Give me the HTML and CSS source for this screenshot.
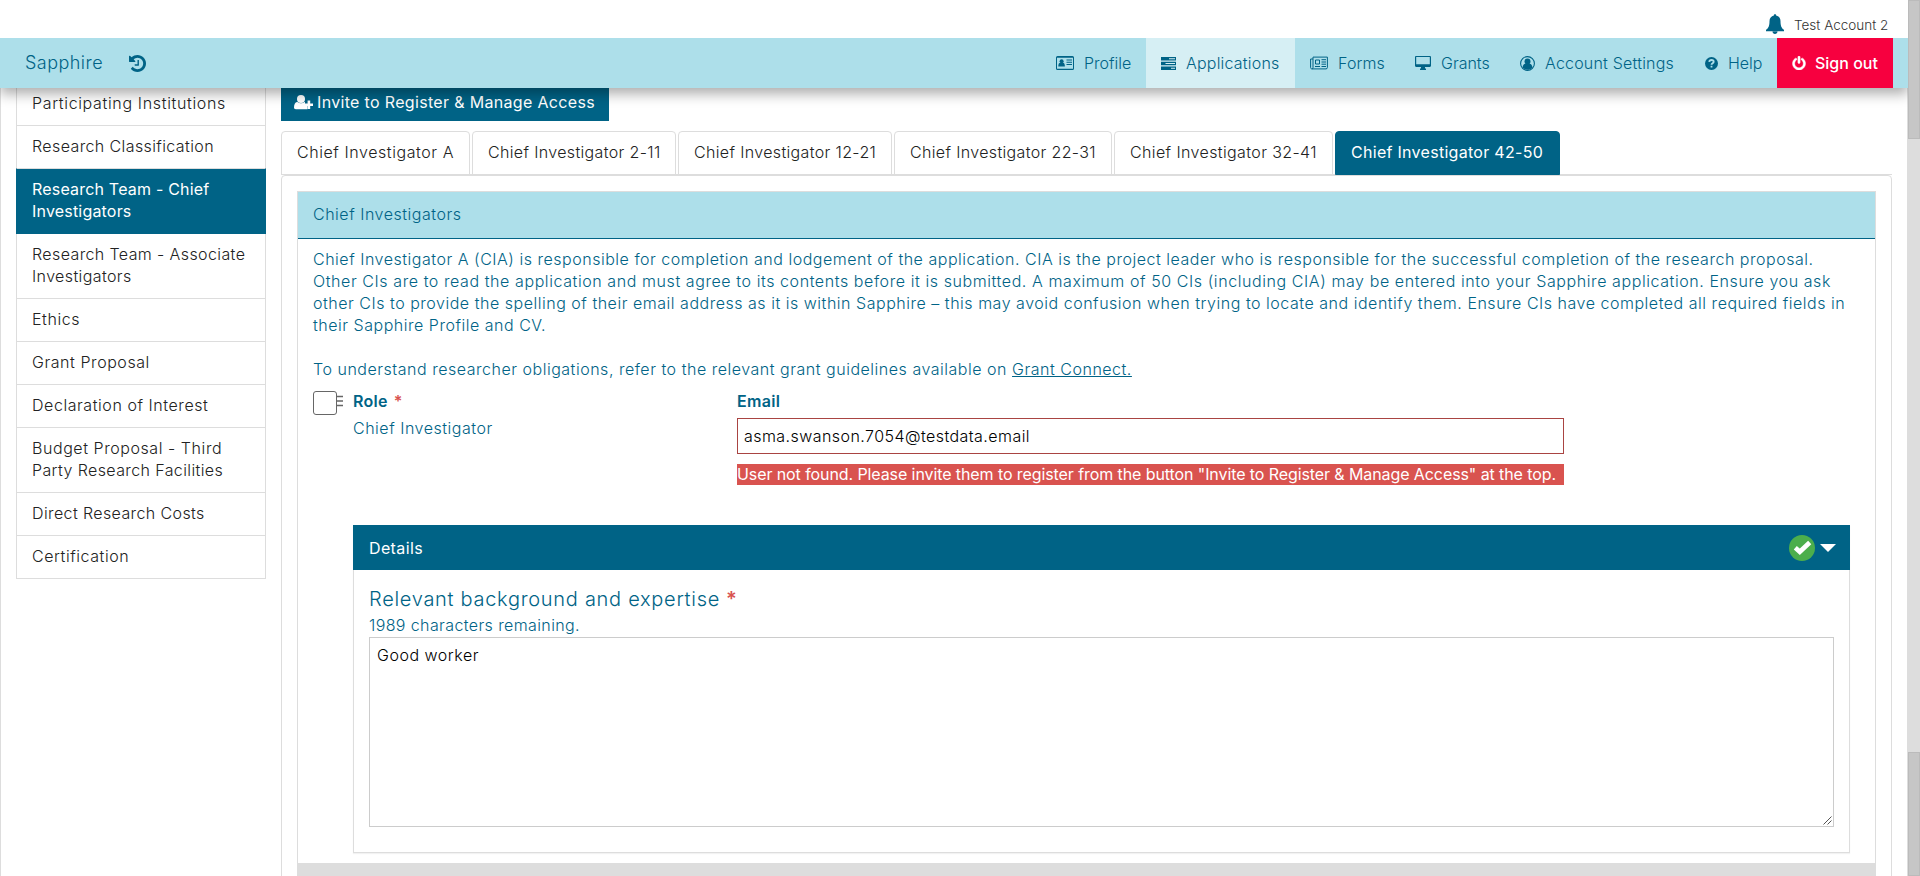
FILE: index.html
```html
<!DOCTYPE html>
<html lang="en">
<head>
<meta charset="utf-8">
<title>Sapphire</title>
<link rel="stylesheet" href="styles.css">
</head>
<body>
<div class="page">
  <div class="app">
    <div class="account">
      <svg class="bell" viewBox="0 0 18 20"><path d="M9 0.3c1 0 1.2.6 1.1 1.3 2.700.6 4.400 2.700 4.400 5.600 0 4.700 1 6.900 3.500 8.600v1.500H0v-1.500c2.500-1.700 3.500-3.900 3.500-8.600 0-2.900 1.700-5 4.400-5.600C7.800.9 8 .3 9 .3zM6.500 17.500h5c0 1.400-1.100 2.400-2.500 2.400s-2.500-1-2.500-2.400z"/></svg>
      <div class="account-name"><span>Test Account 2</span></div>
    </div>
    <header class="navbar">
      <div class="brand"><span>Sapphire</span></div>
      <svg class="history" viewBox="0 128 1536 1536"><path d="M1536 896q0 156-61 298t-164 245-245 164-298 61q-172 0-327-72.500t-264-204.500q-7-10-6.500-22.500t8.500-20.500l137-138q10-9 25-9 16 2 23 12 73 95 179 147t225 52q104 0 198.500-40.500t163.500-109.500 109.500-163.500 40.500-198.500-40.500-198.500-109.500-163.500-163.500-109.500-198.500-40.500q-98 0-188 35.500t-160 101.500l137 138q31 30 14 69-17 40-59 40h-448q-26 0-45-19t-19-45v-448q0-42 40-59 39-17 69 14l130 129q107-101 244.500-156.500t284.500-55.500q156 0 298 61t245 164 164 245 61 298zm-640-288v448q0 14-9 23t-23 9h-320q-14 0-23-9t-9-23v-64q0-14 9-23t23-9h224v-352q0-14 9-23t23-9h64q14 0 23 9t9 23z"/></svg>
      <nav class="menu">
        <a class="item profile"><svg class="ic w18" viewBox="0 0 18 14"><path fill-rule="evenodd" d="M1.500 0h15A1.500 1.500 0 0 1 18 1.500v11a1.500 1.500 0 0 1-1.500 1.500h-15A1.500 1.500 0 0 1 0 12.500v-11A1.500 1.500 0 0 1 1.500 0zM1 1.800v11h16v-11z"/><circle cx="5.600" cy="5.200" r="2"/><path d="M2.300 10.500c0-2.200.7-3.500 1.700-3.700h3.200c1 .2 1.700 1.500 1.700 3.700zM10.500 3.500H16v1h-5.500zM10.500 5.700H16v1h-5.500zM10.500 8H16v1h-5.500z"/></svg><span>Profile</span></a>
        <a class="item applications"><svg class="ic w15" viewBox="0 0 15 13"><path fill-rule="evenodd" d="M0 0h15v3.400H0zM8 1.200v1h6v-1zM0 4.700h15v3.500H0zM4.500 6v1H14V6zM0 9.500h15V13H0zM10 10.800v1h4v-1z"/></svg><span>Applications</span></a>
        <a class="item forms"><svg class="ic w18" viewBox="0 0 18 13"><path fill="none" stroke="currentColor" d="M3 .6h14.400v10.400c0 .9-.6 1.400-1.400 1.400H2C1 12.400.6 11.800.6 11V2.500H3M3 .6v10.600c0 .7-.4 1.200-1 1.200M5.500 3.500h4v4h-4zM5 10h5M11.500 3.200H16M11.500 5.500H16M11.500 7.700H16M11.500 10H16"/></svg><span>Forms</span></a>
        <a class="item grants"><svg class="ic w16" viewBox="0 0 16 14"><path fill-rule="evenodd" d="M1.200 0h13.600C15.500 0 16 .5 16 1.200v8.600c0 .7-.5 1.200-1.200 1.200H10v1.500h1V14H5v-1.500h1V11H1.200C.5 11 0 10.500 0 9.800V1.200C0 .5.500 0 1.200 0zM1.200 1.100v7.200h13.600V1.100z"/></svg><span>Grants</span></a>
        <a class="item settings"><svg class="ic w15" viewBox="0 0 15 15"><circle cx="7.500" cy="7.500" r="6.900" fill="none" stroke="currentColor" stroke-width="1.100"/><circle cx="7.500" cy="5.600" r="3"/><path d="M2.500 11.500c.3-2.500 1.400-3.700 2.800-3.800h4.400c1.400.1 2.500 1.300 2.800 3.800-1.300 1.500-3 2.300-5 2.300s-3.700-.8-5-2.300z"/></svg><span>Account Settings</span></a>
        <a class="item help"><svg class="ic w13" viewBox="0 0 13 13"><circle cx="6.500" cy="6.500" r="6.500"/><path fill="none" stroke="#addfea" stroke-width="1.800" d="M4.200 4.900C4.400 3.500 5.300 3 6.500 3c1.300 0 2.200.7 2.200 1.700 0 1.500-2.200 1.500-2.200 3.100M6.500 8.800v1.800"/></svg><span>Help</span></a>
        <a class="item signout"><svg class="ic w14" viewBox="0 0 1536 1664"><path stroke="#fff" stroke-width="60" d="M1536 896q0 156-61 298t-164 245-245 164-298 61-298-61-245-164-164-245-61-298q0-182 80.500-343t226.500-270q43-32 95.500-25t83.500 50q32 42 24.500 94.500t-49.500 84.500q-98 74-151.500 181t-53.500 228q0 104 40.500 198.500t109.500 163.500 163.500 109.500 198.500 40.500 198.500-40.500 163.500-109.500 109.500-163.500 40.500-198.500q0-121-53.500-228t-151.500-181q-42-32-49.500-84.500t24.500-94.500q31-43 84-50t95 25q146 109 226.500 270t80.500 343zm-640-768v640q0 52-38 90t-90 38-90-38-38-90v-640q0-52 38-90t90-38 90 38 38 90z"/></svg><span>Sign out</span></a>
      </nav>
    </header>
    <main class="content">
      <ul class="side">
        <li class="wider">Participating Institutions</li>
        <li class="tight">Research Classification</li>
        <li class="on">Research Team - Chief<br>Investigators</li>
        <li class="tight">Research Team - Associate<br>Investigators</li>
        <li>Ethics</li>
        <li>Grant Proposal</li>
        <li>Declaration of Interest</li>
        <li>Budget Proposal - Third<br><span class="tight">Party Research Facilities</span></li>
        <li class="tight">Direct Research Costs</li>
        <li>Certification</li>
      </ul>
      <section class="work">
        <button class="invite"><svg class="plus" viewBox="0 0 19 15"><circle cx="7" cy="4" r="4"/><path d="M0 12.500C0 9 1.300 7 3.500 7c2 1.700 5 1.700 7 0h.5v2.500h2.500v4.700H1.800C.7 14.200 0 13.500 0 12.500z"/><path d="M13.600 5.500h2.600v3H19V11h-2.800v3h-2.600v-3h-2.800V8.500h2.800z"/></svg><span>Invite to Register &amp; Manage Access</span></button>
        <div class="tabs">
          <a class="tab t1">Chief Investigator A</a>
          <a class="tab t2">Chief Investigator 2-11</a>
          <a class="tab t3">Chief Investigator 12-21</a>
          <a class="tab t4">Chief Investigator 22-31</a>
          <a class="tab t5">Chief Investigator 32-41</a>
          <a class="tab t6 on">Chief Investigator 42-50</a>
        </div>
        <div class="pane">
          <div class="panel">
            <h2 class="panel-title">Chief Investigators</h2>
            <div class="panel-body">
              <p class="intro"><span>Chief Investigator A (CIA) is responsible for completion and lodgement of the application. CIA is the project leader who is responsible for the successful completion of the research proposal.</span><br><span class="loose">Other CIs are to read the application and must agree to its contents before it is submitted. A maximum of 50 CIs (including CIA) may be entered into your Sapphire application. Ensure you ask</span><br><span>other CIs to provide the spelling of their email address as it is within Sapphire – this may avoid confusion when trying to locate and identify them. Ensure CIs have completed all required fields in</span><br><span>their Sapphire Profile and CV.</span></p>
              <p class="intro">To understand researcher obligations, refer to the relevant grant guidelines available on <a class="link">Grant Connect.</a></p>
              <div class="row">
                <div class="handle"><span class="box"></span><svg class="grip" viewBox="0 0 6 12"><path stroke="#666" stroke-width="1.600" d="M0 1.500h6M0 6h6M0 10.500h6"/></svg></div>
                <div class="role"><div class="label"><b>Role</b><i class="req">*</i></div><div class="value">Chief Investigator</div></div>
                <div class="email"><div class="label"><b>Email</b></div><div class="input">asma.swanson.7054@testdata.email</div><div class="error"><span>User not found. Please invite them to register from the button "Invite to Register &amp; Manage Access" at the top.</span></div></div>
              </div>
              <div class="details">
                <div class="details-head"><span>Details</span><span class="state"><svg class="check" viewBox="0 0 26 26"><circle cx="13" cy="13" r="13" fill="#4cae4c"/><path fill="none" stroke="#fff" stroke-width="4.600" d="M6.300 12.800l4.500 4L20.700 7.500"/></svg><svg class="caret" viewBox="0 0 16 8"><path d="M0 0h16L8 8z"/></svg></span></div>
                <div class="details-body">
                  <h3 class="question">Relevant background and expertise<i class="req">*</i></h3>
                  <div class="remaining">1989 characters remaining.</div>
                  <div class="area">Good worker<svg class="grab" viewBox="0 0 9 9"><path d="M.5 8.500l8-8M4.500 8.500l4-4" stroke="#555" stroke-width="1"/></svg></div>
                </div>
              </div>
            </div>
            <div class="band"></div>
          </div>
        </div>
      </section>
    </main>
  </div>
  <div class="scroll"><div class="thumb upper"></div><div class="thumb lower"></div></div>
</div>
</body>
</html>
```
FILE: styles.css
```css
* { box-sizing: border-box; }
body { margin: 0; background: #fff; font: 300 16px/22px Inter, "Liberation Sans", sans-serif; color: #222; }
svg { display: block; fill: currentColor; flex: none; }
p, h2, h3, ul { margin: 0; padding: 0; font-weight: inherit; font-size: 16px; }
span, b, .link, .tab, .side li { white-space: nowrap; }
.page { display: flex; height: 876px; overflow: hidden; }
.app { width: 1908px; display: flex; flex-direction: column; }
.account { height: 38px; display: flex; padding: 14px 19px 0 0; justify-content: flex-end; gap: 10px; color: #333; font-size: 13.5px; line-height: 23px; }
.bell { width: 18px; height: 20px; color: #006386; }
.account-name { width: 95px; }
.navbar { position: relative; z-index: 3; height: 50px; flex: none; background: #addfea; box-shadow: 0 6px 12px rgba(0, 0, 0, .32); display: flex; align-items: center; padding: 0 15px 0 25px; color: #006386; clip-path: inset(0 0 -30px 0); }
.brand { width: 104px; font-size: 18px; letter-spacing: .46px; color: #006386; }
.history { width: 17px; height: 17px; }
.menu { margin-left: auto; display: flex; height: 50px; }
.item { display: flex; align-items: center; padding-left: 15px; gap: 10px; color: #006386; }
.ic { color: #006386; height: 14px; }
.w18 { width: 18px; } .w16 { width: 16px; } .w15 { width: 15px; height: 15px; } .w14 { width: 14px; } .w13 { width: 13px; height: 13px; }
.profile, .forms, .grants { width: 105px; }
.forms { letter-spacing: .12px; }
.applications { width: 149px; background: #d6eff4; letter-spacing: .2px; }
.settings { width: 185px; letter-spacing: .2px; }
.help { width: 87px; }
.signout, .signout .ic { color: #fff; }
.signout { width: 116px; background: #f7003f; font-weight: 500; }
.signout span { margin-left: -1px; }
.content { flex: 1; min-height: 0; display: flex; border: solid #ddd; border-width: 0 1px; }
.side { list-style: none; width: 250px; flex: none; margin: -6px 15px 0 15px; }
.side li { padding: 9px 15px 11px; border: 1px solid #ddd; margin-bottom: -1px; letter-spacing: .56px; }
.side .wider { letter-spacing: .657px; }
.side .tight { letter-spacing: .39px; }
.side .on { background: #006386; background-clip: padding-box; border-color: #ddd #006386 #006386; color: #fff; font-weight: 400; position: relative; z-index: 1; letter-spacing: .19px; }
.work { width: 1611px; }
.invite { display: flex; gap: 4px; align-items: center; height: 36px; width: 328px; margin: -3px 0 0; border: 0; padding: 0 0 2px 13px; background: #006386; color: #fff; font: 400 16px/22px Inter, sans-serif; letter-spacing: .33px; }
.plus { width: 19px; height: 15px; }
.tabs { display: flex; gap: 2px; margin-top: 10px; height: 44px; border-bottom: 1px solid #ddd; }
.tab { height: 44px; border: 1px solid #ddd; border-radius: 4px 4px 0 0; padding: 9px 0 0 15px; letter-spacing: .35px; }
.tab.on { background: #006386; border-color: #006386; color: #fff; font-weight: 400; letter-spacing: .29px; }
.t1 { width: 189px; letter-spacing: .567px; } .t2 { width: 204px; } .t3 { width: 214px; } .t4 { width: 218px; } .t5 { width: 219px; letter-spacing: .386px; } .t6 { width: 225px; }
.pane { border: 1px solid #ddd; border-radius: 4px; padding: 15px; height: 720px; }
.panel { border: 1px solid #ddd; color: #006386; letter-spacing: .52px; }
.panel-title { height: 47px; background: #addfea; border-bottom: 1px solid #006386; padding: 11px 15px; }
.panel-body { padding: 9px 25px 0 15px; height: 624px; }
.intro { margin-bottom: 22px; }
.intro .loose { letter-spacing: .581px; }
.link { text-decoration: underline; }
.row { display: flex; margin-top: -12px; height: 135px; }
.handle { display: flex; width: 40px; padding-top: 1px; }
.box { width: 24px; height: 24px; border: 1px solid #666; border-radius: 3px; background: #fff; }
.grip { width: 6px; height: 12px; margin-top: 4px; }
.role { width: 384px; }
.label { line-height: 22px; color: #006386; letter-spacing: .3px; }
.label b { font-weight: 600; }
.req { color: #d9534f; font-style: normal; font-weight: 600; margin-left: 6px; }
.value { margin-top: 5px; }
.input { margin-top: 6px; width: 827px; height: 36px; border: 1px solid #a94442; padding: 6px; color: #000; letter-spacing: .442px; }
.error { margin-top: 10px; height: 21px; width: 827px; line-height: 20px; background: #d9534f; color: #fff; font-weight: 400; letter-spacing: -.09px; }
.details { margin-left: 40px; height: 328px; border: 1px solid #ddd; border-top: 0; box-shadow: 0 1px 1px rgba(0, 0, 0, .05); }
.details-head { height: 45px; margin: 0 -1px; background: #006386; color: #fff; font-weight: 400; display: flex; justify-content: space-between; align-items: center; padding: 0 14px 0 16px; letter-spacing: .37px; }
.state { display: flex; align-items: center; gap: 5px; }
.check { width: 26px; height: 26px; } .caret { width: 16px; height: 8px; }
.details-body { padding: 16px 15px; }
.question { font-size: 20px; line-height: 26px; letter-spacing: .711px; }
.remaining { margin: 2px 0 1px; letter-spacing: .39px; }
.area { position: relative; width: 1465px; height: 190px; border: 1px solid #ccc; padding: 6px 7px; color: #000; }
.grab { position: absolute; right: 1px; bottom: 1px; width: 9px; height: 9px; }
.band { height: 40px; background: #ddd; }
.scroll { width: 12px; background: #ddd; display: flex; flex-direction: column; justify-content: space-between; }
.thumb { background: #c6c6c6; border: 1px solid #bbb; }
.upper { height: 139px; } .lower { height: 124px; }
```
